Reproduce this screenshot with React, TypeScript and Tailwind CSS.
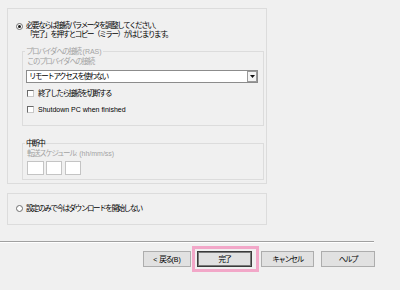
import React from 'react'

const jp = 'text-[7.5px] tracking-[-1.4px]'
const lat = 'text-[7px] tracking-normal'

function Radio({ checked }: { checked?: boolean }) {
  return (
    <span className="w-[7px] h-[7px] rounded-full border border-[#6e6e6e] bg-white flex items-center justify-center flex-shrink-0">
      {checked && <span className="w-[3px] h-[3px] rounded-full bg-[#1a1a1a]" />}
    </span>
  )
}

function Check() {
  return (
    <span className="w-[7px] h-[7px] bg-white border border-t-[#6a6a6a] border-l-[#6a6a6a] border-r-[#c8c8c8] border-b-[#c8c8c8] flex-shrink-0" />
  )
}

function Btn({ children, primary, width }: { children: React.ReactNode; primary?: boolean; width: string }) {
  return (
    <div
      className={
        'h-[16px] flex items-center justify-center bg-[#e1e1e1] text-[#000] ' +
        jp +
        ' ' +
        width +
        (primary ? ' border border-[#3a3a3a] shadow-[inset_0_0_0_1px_#7a7a7a]' : ' border border-[#adadad]')
      }
    >
      {children}
    </div>
  )
}

export default function App() {
  return (
    <div className="w-[400px] h-[290px] bg-[#f0f0f0] relative overflow-hidden flex flex-col text-[7px] leading-[9px] text-[#000] font-['Liberation_Sans','Noto_Sans_CJK_JP',sans-serif]">
      {/* 上のグループ */}
      <div className="mt-[8px] ml-[7px] w-[260px] h-[176px] border border-[#dcdcdc] flex flex-col">
        <div className="mt-[12px] ml-[8px] flex items-start gap-[3px]">
          <span className="mt-[2px]">
            <Radio checked />
          </span>
          <div className={jp}>
            <p>必要ならば接続パラメータを調整してください、</p>
            <p>「完了」を押すとコピー（ミラー）がはじまります。</p>
          </div>
        </div>

        {/* RAS */}
        <div className="relative mt-[12px] ml-[14px] w-[242px] h-[75px] border border-[#dcdcdc] flex flex-col">
          <span className={'absolute -top-[5px] left-[2px] px-[1px] bg-[#f0f0f0] text-[#a3a3a3] ' + jp}>
            プロバイダへの接続<span className={lat}>&nbsp;(RAS)</span>
          </span>
          <p className={'mt-[5px] ml-[4px] text-[#a3a3a3] ' + jp}>このプロバイダへの接続</p>
          <div className="mt-[4px] ml-[3px] w-[232px] h-[13px] bg-white border border-[#8c8c8c] flex items-center">
            <span className={'flex-1 pl-[2px] ' + jp}>リモートアクセスを使わない</span>
            <span className="w-[10px] h-[11px] border border-[#9a9a9a] bg-[#f4f4f4] flex items-center justify-center">
              <svg width="5" height="3" viewBox="0 0 5 3">
                <path d="M0 0h5L2.5 3z" fill="#111" />
              </svg>
            </span>
          </div>
          <div className="mt-[6px] ml-[4px] flex items-center gap-[4px]">
            <Check />
            <span className={jp}>終了したら接続を切断する</span>
          </div>
          <div className="mt-[7px] ml-[4px] flex items-center gap-[4px]">
            <Check />
            <span className={lat}>Shutdown PC when finished</span>
          </div>
        </div>

        {/* 中断中 */}
        <div className="relative mt-[17px] ml-[14px] w-[242px] h-[37px] border border-[#dcdcdc] flex flex-col">
          <span className={'absolute -top-[5px] left-[2px] px-[1px] bg-[#f0f0f0] ' + jp}>中断中</span>
          <p className={'mt-[5px] ml-[4px] text-[#a3a3a3] ' + jp}>
            転送スケジュール<span className={lat}>: (hh/mm/ss)</span>
          </p>
          <div className="mt-[3px] ml-[4px] flex">
            <span className="w-[17px] h-[14px] bg-white border border-[#c4c4c4]" />
            <span className="ml-[2px] w-[16px] h-[14px] bg-white border border-[#c4c4c4]" />
            <span className="ml-[3px] w-[16px] h-[14px] bg-white border border-[#c4c4c4]" />
          </div>
        </div>
      </div>

      {/* 下のグループ */}
      <div className="mt-[9px] ml-[7px] w-[260px] h-[32px] border border-[#dcdcdc] flex items-start">
        <div className="mt-[10px] ml-[8px] flex items-center gap-[3px]">
          <Radio />
          <span className={jp}>設定のみで今はダウンロードを開始しない</span>
        </div>
      </div>

      <div className="mt-[16px] w-[374px] h-[1px] bg-[#a0a0a0]" />
      <div className="w-[374px] h-[1px] bg-white" />

      <div className="mt-[8px] ml-[143px] flex">
        <Btn width="w-[48px]">
          <span className={lat}>&lt;&nbsp;</span>戻る<span className={lat}>(B)</span>
        </Btn>
        <div className="ml-[6px]">
          <Btn primary width="w-[55px]">完了</Btn>
        </div>
        <div className="ml-[9px]">
          <Btn width="w-[53px]">キャンセル</Btn>
        </div>
        <div className="ml-[7px]">
          <Btn width="w-[54px]">ヘルプ</Btn>
        </div>
      </div>

      {/* ハイライト */}
      <div className="absolute left-[192px] top-[246px] w-[67px] h-[26px] border-[3px] border-[#f2a7c8] pointer-events-none" />
    </div>
  )
}
